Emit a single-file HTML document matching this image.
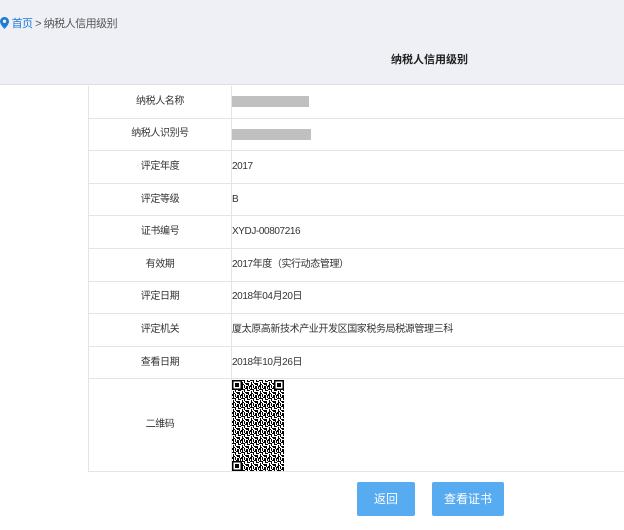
<!DOCTYPE html>
<html><head><meta charset="utf-8"><style>
*{margin:0;padding:0;box-sizing:border-box}
body{width:624px;height:530px;background:#fff;font-family:"Liberation Sans","Noto Sans CJK SC",sans-serif;color:#333;position:relative;overflow:hidden}
.hdr{position:absolute;left:0;top:0;width:624px;height:85px;background:#eff0f5;border-bottom:1px solid #ddd}
.bc{position:absolute;left:0;top:15px;font-size:11px;color:#555;letter-spacing:-0.5px}
.bc a{color:#1e7bd6}
.title{position:absolute;left:391px;top:51px;font-size:11px;font-weight:bold;color:#222}
.tbl{position:absolute;left:88px;top:86px;width:536px;border-left:1px solid #e4e4e4}
.row{display:flex;height:32.6px;border-bottom:1px solid #e4e4e4;font-size:10px;letter-spacing:-0.4px;align-items:center;line-height:14px}
.l{width:143px;text-align:center;border-right:1px solid #e4e4e4;height:100%;display:flex;align-items:center;justify-content:center}
.v{flex:1;display:flex;align-items:center;height:100%}
.bar{display:inline-block;height:11px;background:#c0c0c0}
.btn{position:absolute;top:482px;height:34px;background:#57abf1;color:#fff;font-size:12px;text-align:center;line-height:34px;border-radius:2px}
</style></head><body>
<div class="hdr">
<div class="bc"><svg width="9" height="12" viewBox="0 0 9 12" style="vertical-align:-2px"><path d="M4.5 0C2 0 0 2 0 4.5 0 7.5 4.5 12 4.5 12S9 7.5 9 4.5C9 2 7 0 4.5 0z" fill="#1e7bd6"/><circle cx="4.5" cy="4.3" r="1.7" fill="#eff0f5"/></svg> <a>首页</a> &gt; 纳税人信用级别</div>
<div class="title">纳税人信用级别</div>
</div>
<div class="tbl">
<div class="row"><div class="l">纳税人名称</div><div class="v"><span class="bar" style="width:77px"></span></div></div>
<div class="row"><div class="l">纳税人识别号</div><div class="v"><span class="bar" style="width:79px"></span></div></div>
<div class="row"><div class="l">评定年度</div><div class="v">2017</div></div>
<div class="row"><div class="l">评定等级</div><div class="v">B</div></div>
<div class="row"><div class="l">证书编号</div><div class="v">XYDJ-00807216</div></div>
<div class="row"><div class="l">有效期</div><div class="v">2017年度（实行动态管理）</div></div>
<div class="row"><div class="l">评定日期</div><div class="v">2018年04月20日</div></div>
<div class="row"><div class="l">评定机关</div><div class="v">厦太原高新技术产业开发区国家税务局税源管理三科</div></div>
<div class="row"><div class="l">查看日期</div><div class="v">2018年10月26日</div></div>
<div class="row" style="height:93px"><div class="l">二维码</div><div class="v">
<svg width="52" height="91" viewBox="0 0 52 91">
<defs><pattern id="p" width="9" height="9" patternUnits="userSpaceOnUse">
<rect width="9" height="9" fill="#fff"/>
<g fill="#000">
<rect x="0" y="0" width="3" height="1"/><rect x="3" y="0" width="1" height="3"/><rect x="6" y="1" width="3" height="1"/>
<rect x="1" y="2" width="1" height="3"/><rect x="4" y="3" width="3" height="1"/><rect x="7" y="3" width="1" height="3"/>
<rect x="0" y="5" width="2" height="2"/><rect x="3" y="5" width="1" height="3"/><rect x="5" y="6" width="2" height="2"/>
<rect x="8" y="6" width="1" height="3"/><rect x="1" y="7" width="1" height="2"/><rect x="4" y="8" width="3" height="1"/>
<rect x="2" y="4" width="1" height="1"/><rect x="5" y="4" width="2" height="1"/><rect x="6" y="0" width="1" height="1"/>
</g>
</pattern></defs>
<rect width="52" height="91" fill="url(#p)"/>
<g fill="#000"><rect x="0" y="0" width="10" height="10"/><rect x="42" y="0" width="10" height="10"/><rect x="0" y="81" width="10" height="10"/></g>
<g fill="#fff"><rect x="1.5" y="1.5" width="7" height="7"/><rect x="43.5" y="1.5" width="7" height="7"/><rect x="1.5" y="82.5" width="7" height="7"/></g>
<g fill="#000"><rect x="3" y="3" width="4" height="4"/><rect x="45" y="3" width="4" height="4"/><rect x="3" y="84" width="4" height="4"/></g>
</svg></div></div>
</div>
<div class="btn" style="left:357px;width:58px">返回</div>
<div class="btn" style="left:432px;width:72px">查看证书</div>
</body></html>
